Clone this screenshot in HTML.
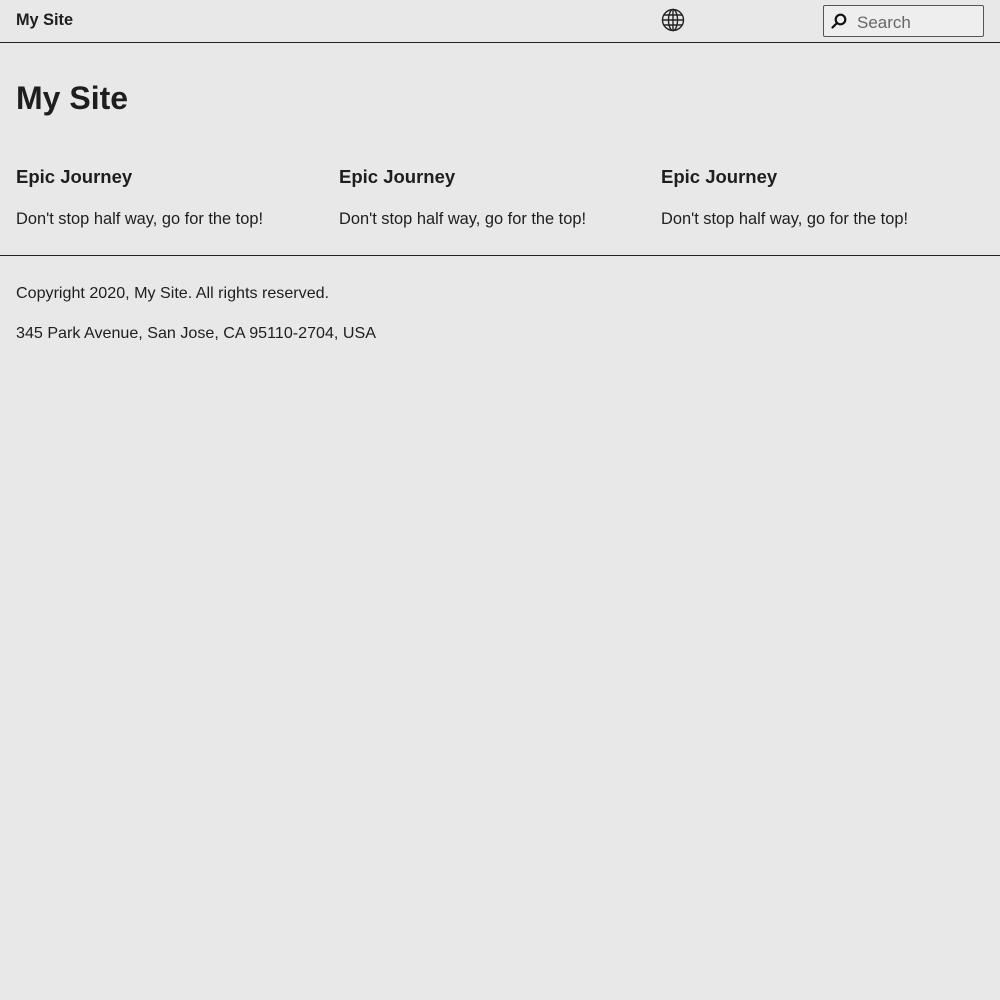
<!DOCTYPE html>
<html><head><meta charset="utf-8"><style>
html,body{margin:0;padding:0;background:#e8e8e8;color:#1e1e1e;font-family:"Liberation Sans",Arial,sans-serif;width:1000px;height:1000px;overflow:hidden}
.hdr{position:absolute;left:0;top:0;width:1000px;height:42px;border-bottom:1px solid #222}
.brand{position:absolute;left:16px;top:11px;font-size:16.3px;font-weight:bold}
.globe{position:absolute;left:661px;top:8px}
.search{position:absolute;left:823px;top:5px;width:161px;height:32px;border:1px solid #555;border-radius:2px;background:#eee;box-sizing:border-box}
.search svg{position:absolute;left:7px;top:7px}
.search span{position:absolute;left:33px;top:7px;font-size:17px;color:#666}
h1{position:absolute;left:16px;top:80px;margin:0;font-size:32px;font-weight:bold}
.col{position:absolute;top:166px}
.col h3{margin:0;font-size:18.5px;font-weight:bold}
.col p{margin:0;position:absolute;top:44px;white-space:nowrap;font-size:16.4px}
.line{position:absolute;left:0;top:255px;width:1000px;border-top:1px solid #222}
.f{position:absolute;left:16px;font-size:16.1px;margin:0}
</style></head><body>
<div class="hdr">
<div class="brand">My Site</div>
<svg class="globe" width="24" height="24" viewBox="0 0 24 24" fill="none" stroke="#222" stroke-width="1.4"><circle cx="12" cy="12" r="10.5"/><ellipse cx="12" cy="12" rx="4.5" ry="10.5"/><line x1="12" y1="1.5" x2="12" y2="22.5"/><line x1="1.5" y1="12" x2="22.5" y2="12"/><line x1="3" y1="7" x2="21" y2="7"/><line x1="3" y1="17" x2="21" y2="17"/></svg>
<div class="search"><svg width="16" height="16" viewBox="0 0 16 16" fill="none" stroke="#111" stroke-width="2.2"><circle cx="9.5" cy="6.5" r="4.8"/><line x1="6" y1="10" x2="1.5" y2="14.5" stroke-linecap="round"/></svg><span>Search</span></div>
</div>
<h1>My Site</h1>
<div class="col" style="left:16px"><h3>Epic Journey</h3><p>Don't stop half way, go for the top!</p></div>
<div class="col" style="left:339px"><h3>Epic Journey</h3><p>Don't stop half way, go for the top!</p></div>
<div class="col" style="left:661px"><h3>Epic Journey</h3><p>Don't stop half way, go for the top!</p></div>
<div class="line"></div>
<p class="f" style="top:284px">Copyright 2020, My Site. All rights reserved.</p>
<p class="f" style="top:324px">345 Park Avenue, San Jose, CA 95110-2704, USA</p>
</body></html>
